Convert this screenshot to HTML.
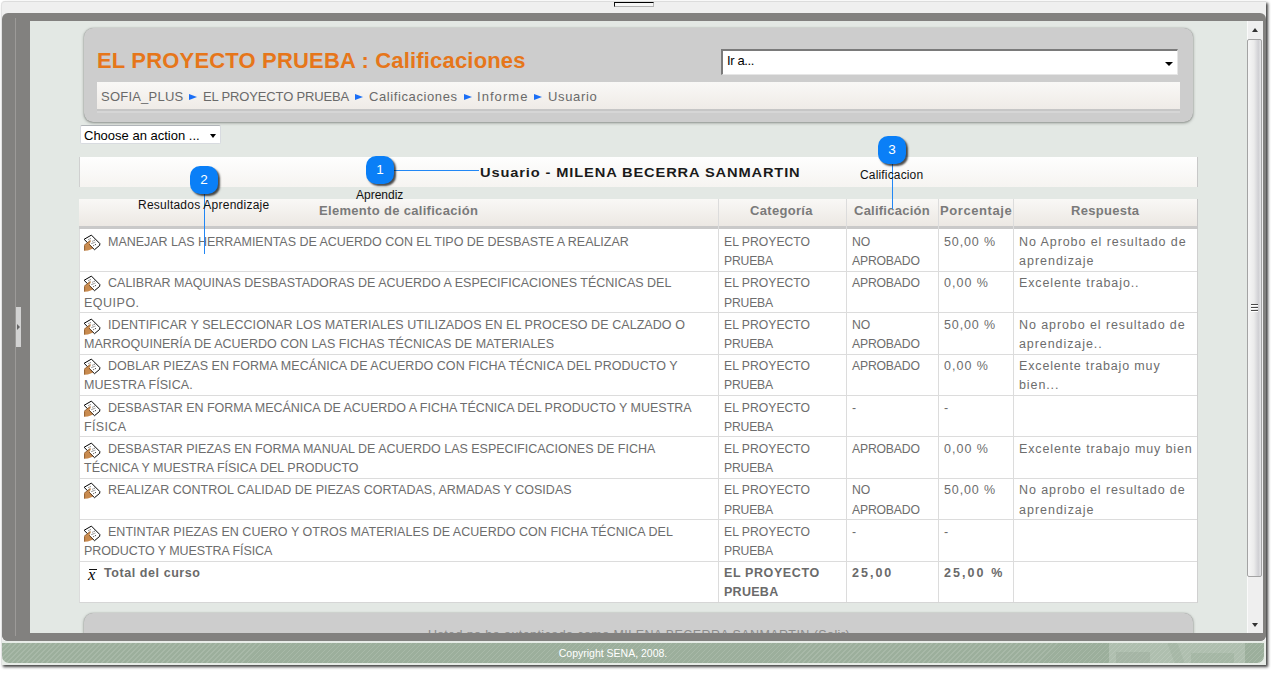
<!DOCTYPE html>
<html><head><meta charset="utf-8">
<style>
*{box-sizing:border-box}
html,body{margin:0;padding:0;width:1279px;height:678px;overflow:hidden;background:#fff;font-family:"Liberation Sans",sans-serif}
.a{position:absolute}
#outer{left:1px;top:1px;width:1265px;height:664px;background:#efefef;border-radius:4px 0 0 0;border-top:1px solid #dcdcdc;border-left:1px solid #e2e2e2;box-shadow:2px 2px 3px rgba(0,0,0,.75)}
#frame{left:2px;top:13px;width:1264px;height:628px;background:#82817f;border-radius:6px}
#vline{left:15px;top:18px;width:1px;height:618px;background:#9c9a98}
#content{left:30px;top:21px;width:1217px;height:612px;background:#e3e8e4}
#sb{left:1247px;top:21px;width:16px;height:612px;background:#efefef;border-left:1px solid #fafafa}
#thumb{left:1247px;top:39px;width:15px;height:538px;border:1px solid #a3a3a3;border-radius:2px;background:linear-gradient(90deg,#f6f6f6 0%,#ececec 45%,#d0d0d4 80%,#e6e6e8 100%)}
#footer{left:2px;top:643px;width:1262px;height:20px;border-radius:0 0 7px 7px;background:#9caf9c repeating-linear-gradient(135deg,rgba(255,255,255,0) 0px,rgba(255,255,255,0) 2.6px,rgba(255,255,255,.12) 2.6px,rgba(255,255,255,.12) 3.54px);overflow:hidden}
#copy{left:0;top:643px;width:1226px;text-align:center;color:#fff;font-size:10.5px;line-height:20px}
.panel{background:#cdcdcd;border-radius:9px;box-shadow:0 0 1px rgba(60,65,60,.45),0 1px 3px 0 rgba(50,55,50,.5)}
.sel{background:#fff}
.bc{color:#6a6a6a;font-size:13px;white-space:nowrap;line-height:16px}
.tri{width:0;height:0;border-left:8px solid #1b6ef5;border-top:3.5px solid transparent;border-bottom:3.5px solid transparent}
.callout{width:28px;height:28px;border-radius:10px;background:#0a7ff7;box-shadow:2px 2px 2px rgba(0,0,0,.7);color:#fff;font-size:13.5px;text-align:center;line-height:28px}
.cl{background:#2187f5}
.lbl{color:#111;font-size:12px;white-space:nowrap;line-height:14px}
.txt{color:#6d6d6d;font-size:12.5px;white-space:nowrap;line-height:19px}
.b{font-weight:bold;color:#6a6a6a}
.hd{color:#7a7a7a;font-size:13px;font-weight:bold;white-space:nowrap;line-height:16px}
.vl{background:#dcdcdc;width:1px}
.hl{background:#dcdcdc;height:1px}
</style></head><body>
<div id="outer" class="a"></div>
<div class="a" style="left:614px;top:2px;width:40px;height:5px;border-top:1.5px solid #000;border-left:1px solid #111;border-right:1px solid #b8b8b8;border-bottom:1px solid #b0b0b0;background:#f6f6f6"></div>
<div id="frame" class="a"></div>
<div id="vline" class="a"></div>
<div class="a" style="left:16px;top:307px;width:5px;height:40px;background:#d2d2d2"></div>
<div class="a" style="left:17px;top:324px;width:0;height:0;border-left:3px solid #666;border-top:3px solid transparent;border-bottom:3px solid transparent"></div>
<div id="content" class="a"></div>
<div id="sb" class="a"></div>
<div class="a" style="left:1252px;top:28px;width:0;height:0;border-bottom:4px solid #333;border-left:3.5px solid transparent;border-right:3.5px solid transparent"></div>
<div class="a" style="left:1252px;top:623px;width:0;height:0;border-top:4px solid #333;border-left:3.5px solid transparent;border-right:3.5px solid transparent"></div>
<div id="thumb" class="a"></div>
<div class="a" style="left:1251px;top:304px;width:7px;height:1px;background:#4a4a4a;box-shadow:0 1px 0 #fff,0 3px 0 #4a4a4a,0 4px 0 #fff,0 6px 0 #4a4a4a,0 7px 0 #fff"></div>
<div class="a" style="left:2px;top:641px;width:1264px;height:24px;background:#e7ece7"></div>
<div id="footer" class="a"><div class="a" style="left:1107px;top:0;width:136px;height:20px;background:rgba(255,255,255,.2)"></div><div class="a" style="left:1114px;top:9px;width:34px;height:11px;background:rgba(120,140,120,.18)"></div><div class="a" style="left:1169px;top:0;width:10px;height:20px;background:rgba(120,140,120,.14);transform:skewX(20deg)"></div><div class="a" style="left:1189px;top:10px;width:43px;height:10px;background:rgba(120,140,120,.16)"></div></div>
<div id="copy" class="a">Copyright SENA, 2008.</div>

<!-- header panel -->
<div class="a panel" style="left:83.5px;top:28px;width:1109.5px;height:94px"></div>
<div class="a" style="left:97px;top:45.5px;font-size:22px;font-weight:bold;color:#e6761a;line-height:30px;white-space:nowrap;letter-spacing:.174px">EL PROYECTO PRUEBA : Calificaciones</div>
<div class="a sel" style="left:721px;top:49px;width:457px;height:26px;border-top:2px solid #7a7a7a;border-left:2px solid #7a7a7a;border-bottom:1px solid #e6e6e6;border-right:1px solid #e6e6e6"></div>
<div class="a" style="left:727px;top:52px;font-size:13px;color:#000;line-height:18px;letter-spacing:-.37px">Ir a...</div>
<div class="a" style="left:1164.5px;top:61.5px;width:0;height:0;border-top:4px solid #000;border-left:4px solid transparent;border-right:4px solid transparent"></div>
<div class="a" style="left:97px;top:82px;width:1083px;height:27px;background:linear-gradient(#f9f8f6,#efebe7)"></div>
<div class="a" style="left:97px;top:109px;width:1083px;height:2px;background:#c6c6c6;box-shadow:0 2px 0 #d6d6d6"></div>
<div class="a bc" style="left:101px;top:89px;letter-spacing:.22px">SOFIA_PLUS</div>
<div class="a tri" style="left:189px;top:93.5px"></div>
<div class="a bc" style="left:203px;top:89px;letter-spacing:-.15px">EL PROYECTO PRUEBA</div>
<div class="a tri" style="left:355px;top:93.5px"></div>
<div class="a bc" style="left:369px;top:89px;letter-spacing:.6px">Calificaciones</div>
<div class="a tri" style="left:464px;top:93.5px"></div>
<div class="a bc" style="left:477px;top:89px;letter-spacing:1.05px">Informe</div>
<div class="a tri" style="left:534px;top:93.5px"></div>
<div class="a bc" style="left:548px;top:89px;letter-spacing:.65px">Usuario</div>

<!-- choose action -->
<div class="a sel" style="left:79.5px;top:125.3px;width:141.7px;height:18.9px;border:1px solid #d8dbe0;border-top-color:#b0b4b8;border-radius:2px"></div>
<div class="a" style="left:84px;top:128px;font-size:13px;color:#000;line-height:16px">Choose an action ...</div>
<div class="a" style="left:210px;top:134px;width:0;height:0;border-top:4px solid #000;border-left:3.5px solid transparent;border-right:3.5px solid transparent"></div>

<!-- table -->
<div class="a" style="left:79px;top:157px;width:1119px;height:30px;background:linear-gradient(#fefefe,#f6f4f1);border-left:1px solid #d0d0d0;border-right:1px solid #c8c8c8"></div>
<div class="a" style="left:480px;top:164px;font-size:13.5px;font-weight:bold;color:#1a1a1a;letter-spacing:.8px;line-height:18px;white-space:nowrap;transform-origin:0 0;transform:scaleX(1.085)">Usuario - MILENA BECERRA SANMARTIN</div>

<div class="a" style="left:79px;top:199px;width:1119px;height:27px;background:linear-gradient(#f9f8f6,#ece8e3);border-right:1px solid #c8c8c8"></div>
<div class="a" style="left:79px;top:226px;width:1119px;height:3px;background:#c9c9c9"></div>
<div id="tbody" class="a" style="left:79px;top:229px;width:1119px;height:374px;background:#fff;border-left:1px solid #dcdcdc;border-right:1px solid #d0d0d0;border-bottom:1px solid #d6d6d6"></div>

<div class="a hd" style="left:319px;top:202.5px;letter-spacing:.31px">Elemento de calificación</div>
<div class="a hd" style="left:750px;top:202.5px;letter-spacing:.31px">Categoría</div>
<div class="a hd" style="left:854px;top:202.5px;letter-spacing:.24px">Calificación</div>
<div class="a hd" style="left:940px;top:202.5px;letter-spacing:.59px">Porcentaje</div>
<div class="a hd" style="left:1071px;top:202.5px;letter-spacing:.29px">Respuesta</div>
<div class="a hl" style="left:80px;top:271px;width:1117px"></div>
<div class="a hl" style="left:80px;top:312px;width:1117px"></div>
<div class="a hl" style="left:80px;top:354px;width:1117px"></div>
<div class="a hl" style="left:80px;top:395px;width:1117px"></div>
<div class="a hl" style="left:80px;top:436px;width:1117px"></div>
<div class="a hl" style="left:80px;top:478px;width:1117px"></div>
<div class="a hl" style="left:80px;top:519px;width:1117px"></div>
<div class="a hl" style="left:80px;top:561px;width:1117px"></div>
<div class="a vl" style="left:718px;top:199px;height:403px"></div>
<div class="a vl" style="left:846px;top:199px;height:403px"></div>
<div class="a vl" style="left:938px;top:199px;height:403px"></div>
<div class="a vl" style="left:1013px;top:199px;height:403px"></div>
<svg class="a" style="left:83px;top:234px" width="18" height="18" viewBox="0 0 18 18"><path d="M1.1 5.3L8.4 1.1L16.8 9.5L16.7 11.3L11.5 15.7Z" fill="#fff" stroke="#000" stroke-width="1"/><path d="M5.5 5.6L7.8 4.4M9.5 7.2L12 6M8.6 9.5L12.6 8M10.3 11.7L13.7 10" stroke="#222" stroke-width=".9" stroke-dasharray="1 1"/><path d="M7.4 6.3L1.1 11.3L1.1 16.8L4.8 16.5L7.7 15.5L9.9 14.6L6.3 10.3L7.8 7.4Z" fill="#c98b4f"/><path d="M7.4 6.3L1.1 11.3M6.3 10.3L9.9 14.6M1.6 12L1.6 16.5" stroke="#7a4a20" stroke-width=".7" fill="none"/></svg>
<div class="a txt" style="left:108px;top:232.7px;letter-spacing:-0.03px">MANEJAR LAS HERRAMIENTAS DE ACUERDO CON EL TIPO DE DESBASTE A REALIZAR</div>
<div class="a txt" style="left:724px;top:232.7px;letter-spacing:0px;font-size:12.2px">EL PROYECTO</div>
<div class="a txt" style="left:724px;top:251.7px;letter-spacing:-0.2px;font-size:12.2px">PRUEBA</div>
<div class="a txt" style="left:852px;top:232.7px;letter-spacing:0px;font-size:12.2px">NO</div>
<div class="a txt" style="left:852px;top:251.7px;letter-spacing:-0.17px;font-size:12.2px">APROBADO</div>
<div class="a txt" style="left:944px;top:232.7px;letter-spacing:0.87px">50,00 %</div>
<div class="a txt" style="left:1019px;top:232.7px;letter-spacing:0.92px">No Aprobo el resultado de</div>
<div class="a txt" style="left:1019px;top:251.7px;letter-spacing:0.99px">aprendizaje</div>
<svg class="a" style="left:83px;top:275px" width="18" height="18" viewBox="0 0 18 18"><path d="M1.1 5.3L8.4 1.1L16.8 9.5L16.7 11.3L11.5 15.7Z" fill="#fff" stroke="#000" stroke-width="1"/><path d="M5.5 5.6L7.8 4.4M9.5 7.2L12 6M8.6 9.5L12.6 8M10.3 11.7L13.7 10" stroke="#222" stroke-width=".9" stroke-dasharray="1 1"/><path d="M7.4 6.3L1.1 11.3L1.1 16.8L4.8 16.5L7.7 15.5L9.9 14.6L6.3 10.3L7.8 7.4Z" fill="#c98b4f"/><path d="M7.4 6.3L1.1 11.3M6.3 10.3L9.9 14.6M1.6 12L1.6 16.5" stroke="#7a4a20" stroke-width=".7" fill="none"/></svg>
<div class="a txt" style="left:108px;top:273.7px;letter-spacing:0.007px">CALIBRAR MAQUINAS DESBASTADORAS DE ACUERDO A ESPECIFICACIONES TÉCNICAS DEL</div>
<div class="a txt" style="left:84px;top:293.7px;letter-spacing:0.5px">EQUIPO.</div>
<div class="a txt" style="left:724px;top:273.7px;letter-spacing:0px;font-size:12.2px">EL PROYECTO</div>
<div class="a txt" style="left:724px;top:293.7px;letter-spacing:-0.2px;font-size:12.2px">PRUEBA</div>
<div class="a txt" style="left:852px;top:273.7px;letter-spacing:-0.17px;font-size:12.2px">APROBADO</div>
<div class="a txt" style="left:944px;top:273.7px;letter-spacing:1.0px">0,00 %</div>
<div class="a txt" style="left:1019px;top:273.7px;letter-spacing:0.89px">Excelente trabajo..</div>
<svg class="a" style="left:83px;top:318px" width="18" height="18" viewBox="0 0 18 18"><path d="M1.1 5.3L8.4 1.1L16.8 9.5L16.7 11.3L11.5 15.7Z" fill="#fff" stroke="#000" stroke-width="1"/><path d="M5.5 5.6L7.8 4.4M9.5 7.2L12 6M8.6 9.5L12.6 8M10.3 11.7L13.7 10" stroke="#222" stroke-width=".9" stroke-dasharray="1 1"/><path d="M7.4 6.3L1.1 11.3L1.1 16.8L4.8 16.5L7.7 15.5L9.9 14.6L6.3 10.3L7.8 7.4Z" fill="#c98b4f"/><path d="M7.4 6.3L1.1 11.3M6.3 10.3L9.9 14.6M1.6 12L1.6 16.5" stroke="#7a4a20" stroke-width=".7" fill="none"/></svg>
<div class="a txt" style="left:108px;top:316.2px;letter-spacing:0.065px">IDENTIFICAR Y SELECCIONAR LOS MATERIALES UTILIZADOS EN EL PROCESO DE CALZADO O</div>
<div class="a txt" style="left:84px;top:335.2px;letter-spacing:0.016px">MARROQUINERÍA DE ACUERDO CON LAS FICHAS TÉCNICAS DE MATERIALES</div>
<div class="a txt" style="left:724px;top:316.2px;letter-spacing:0px;font-size:12.2px">EL PROYECTO</div>
<div class="a txt" style="left:724px;top:335.2px;letter-spacing:-0.2px;font-size:12.2px">PRUEBA</div>
<div class="a txt" style="left:852px;top:316.2px;letter-spacing:0px;font-size:12.2px">NO</div>
<div class="a txt" style="left:852px;top:335.2px;letter-spacing:-0.17px;font-size:12.2px">APROBADO</div>
<div class="a txt" style="left:944px;top:316.2px;letter-spacing:0.87px">50,00 %</div>
<div class="a txt" style="left:1019px;top:316.2px;letter-spacing:0.91px">No aprobo el resultado de</div>
<div class="a txt" style="left:1019px;top:335.2px;letter-spacing:0.92px">aprendizaje..</div>
<svg class="a" style="left:83px;top:358px" width="18" height="18" viewBox="0 0 18 18"><path d="M1.1 5.3L8.4 1.1L16.8 9.5L16.7 11.3L11.5 15.7Z" fill="#fff" stroke="#000" stroke-width="1"/><path d="M5.5 5.6L7.8 4.4M9.5 7.2L12 6M8.6 9.5L12.6 8M10.3 11.7L13.7 10" stroke="#222" stroke-width=".9" stroke-dasharray="1 1"/><path d="M7.4 6.3L1.1 11.3L1.1 16.8L4.8 16.5L7.7 15.5L9.9 14.6L6.3 10.3L7.8 7.4Z" fill="#c98b4f"/><path d="M7.4 6.3L1.1 11.3M6.3 10.3L9.9 14.6M1.6 12L1.6 16.5" stroke="#7a4a20" stroke-width=".7" fill="none"/></svg>
<div class="a txt" style="left:108px;top:356.7px;letter-spacing:0.054px">DOBLAR PIEZAS EN FORMA MECÁNICA DE ACUERDO CON FICHA TÉCNICA DEL PRODUCTO Y</div>
<div class="a txt" style="left:84px;top:375.7px;letter-spacing:0.07px">MUESTRA FÍSICA.</div>
<div class="a txt" style="left:724px;top:356.7px;letter-spacing:0px;font-size:12.2px">EL PROYECTO</div>
<div class="a txt" style="left:724px;top:375.7px;letter-spacing:-0.2px;font-size:12.2px">PRUEBA</div>
<div class="a txt" style="left:852px;top:356.7px;letter-spacing:-0.17px;font-size:12.2px">APROBADO</div>
<div class="a txt" style="left:944px;top:356.7px;letter-spacing:1.0px">0,00 %</div>
<div class="a txt" style="left:1019px;top:356.7px;letter-spacing:0.85px">Excelente trabajo muy</div>
<div class="a txt" style="left:1019px;top:375.7px;letter-spacing:0.9px">bien...</div>
<svg class="a" style="left:83px;top:400px" width="18" height="18" viewBox="0 0 18 18"><path d="M1.1 5.3L8.4 1.1L16.8 9.5L16.7 11.3L11.5 15.7Z" fill="#fff" stroke="#000" stroke-width="1"/><path d="M5.5 5.6L7.8 4.4M9.5 7.2L12 6M8.6 9.5L12.6 8M10.3 11.7L13.7 10" stroke="#222" stroke-width=".9" stroke-dasharray="1 1"/><path d="M7.4 6.3L1.1 11.3L1.1 16.8L4.8 16.5L7.7 15.5L9.9 14.6L6.3 10.3L7.8 7.4Z" fill="#c98b4f"/><path d="M7.4 6.3L1.1 11.3M6.3 10.3L9.9 14.6M1.6 12L1.6 16.5" stroke="#7a4a20" stroke-width=".7" fill="none"/></svg>
<div class="a txt" style="left:108px;top:398.5px;letter-spacing:-0.013px">DESBASTAR EN FORMA MECÁNICA DE ACUERDO A FICHA TÉCNICA DEL PRODUCTO Y MUESTRA</div>
<div class="a txt" style="left:84px;top:417.5px;letter-spacing:0.36px">FÍSICA</div>
<div class="a txt" style="left:724px;top:398.5px;letter-spacing:0px;font-size:12.2px">EL PROYECTO</div>
<div class="a txt" style="left:724px;top:417.5px;letter-spacing:-0.2px;font-size:12.2px">PRUEBA</div>
<div class="a txt" style="left:852px;top:398.5px;letter-spacing:0px;font-size:12.2px">-</div>
<div class="a txt" style="left:944px;top:398.5px;letter-spacing:0px">-</div>
<svg class="a" style="left:83px;top:442px" width="18" height="18" viewBox="0 0 18 18"><path d="M1.1 5.3L8.4 1.1L16.8 9.5L16.7 11.3L11.5 15.7Z" fill="#fff" stroke="#000" stroke-width="1"/><path d="M5.5 5.6L7.8 4.4M9.5 7.2L12 6M8.6 9.5L12.6 8M10.3 11.7L13.7 10" stroke="#222" stroke-width=".9" stroke-dasharray="1 1"/><path d="M7.4 6.3L1.1 11.3L1.1 16.8L4.8 16.5L7.7 15.5L9.9 14.6L6.3 10.3L7.8 7.4Z" fill="#c98b4f"/><path d="M7.4 6.3L1.1 11.3M6.3 10.3L9.9 14.6M1.6 12L1.6 16.5" stroke="#7a4a20" stroke-width=".7" fill="none"/></svg>
<div class="a txt" style="left:108px;top:440.4px;letter-spacing:0px">DESBASTAR PIEZAS EN FORMA MANUAL DE ACUERDO LAS ESPECIFICACIONES DE FICHA</div>
<div class="a txt" style="left:84px;top:459.4px;letter-spacing:0px">TÉCNICA Y MUESTRA FÍSICA DEL PRODUCTO</div>
<div class="a txt" style="left:724px;top:440.4px;letter-spacing:0px;font-size:12.2px">EL PROYECTO</div>
<div class="a txt" style="left:724px;top:459.4px;letter-spacing:-0.2px;font-size:12.2px">PRUEBA</div>
<div class="a txt" style="left:852px;top:440.4px;letter-spacing:-0.17px;font-size:12.2px">APROBADO</div>
<div class="a txt" style="left:944px;top:440.4px;letter-spacing:1.0px">0,00 %</div>
<div class="a txt" style="left:1019px;top:440.4px;letter-spacing:0.88px">Excelente trabajo muy bien</div>
<svg class="a" style="left:83px;top:482px" width="18" height="18" viewBox="0 0 18 18"><path d="M1.1 5.3L8.4 1.1L16.8 9.5L16.7 11.3L11.5 15.7Z" fill="#fff" stroke="#000" stroke-width="1"/><path d="M5.5 5.6L7.8 4.4M9.5 7.2L12 6M8.6 9.5L12.6 8M10.3 11.7L13.7 10" stroke="#222" stroke-width=".9" stroke-dasharray="1 1"/><path d="M7.4 6.3L1.1 11.3L1.1 16.8L4.8 16.5L7.7 15.5L9.9 14.6L6.3 10.3L7.8 7.4Z" fill="#c98b4f"/><path d="M7.4 6.3L1.1 11.3M6.3 10.3L9.9 14.6M1.6 12L1.6 16.5" stroke="#7a4a20" stroke-width=".7" fill="none"/></svg>
<div class="a txt" style="left:108px;top:480.7px;letter-spacing:0.016px">REALIZAR CONTROL CALIDAD DE PIEZAS CORTADAS, ARMADAS Y COSIDAS</div>
<div class="a txt" style="left:724px;top:480.7px;letter-spacing:0px;font-size:12.2px">EL PROYECTO</div>
<div class="a txt" style="left:724px;top:500.7px;letter-spacing:-0.2px;font-size:12.2px">PRUEBA</div>
<div class="a txt" style="left:852px;top:480.7px;letter-spacing:0px;font-size:12.2px">NO</div>
<div class="a txt" style="left:852px;top:500.7px;letter-spacing:-0.17px;font-size:12.2px">APROBADO</div>
<div class="a txt" style="left:944px;top:480.7px;letter-spacing:0.87px">50,00 %</div>
<div class="a txt" style="left:1019px;top:480.7px;letter-spacing:0.91px">No aprobo el resultado de</div>
<div class="a txt" style="left:1019px;top:500.7px;letter-spacing:0.99px">aprendizaje</div>
<svg class="a" style="left:83px;top:525px" width="18" height="18" viewBox="0 0 18 18"><path d="M1.1 5.3L8.4 1.1L16.8 9.5L16.7 11.3L11.5 15.7Z" fill="#fff" stroke="#000" stroke-width="1"/><path d="M5.5 5.6L7.8 4.4M9.5 7.2L12 6M8.6 9.5L12.6 8M10.3 11.7L13.7 10" stroke="#222" stroke-width=".9" stroke-dasharray="1 1"/><path d="M7.4 6.3L1.1 11.3L1.1 16.8L4.8 16.5L7.7 15.5L9.9 14.6L6.3 10.3L7.8 7.4Z" fill="#c98b4f"/><path d="M7.4 6.3L1.1 11.3M6.3 10.3L9.9 14.6M1.6 12L1.6 16.5" stroke="#7a4a20" stroke-width=".7" fill="none"/></svg>
<div class="a txt" style="left:108px;top:523.3px;letter-spacing:0.027px">ENTINTAR PIEZAS EN CUERO Y OTROS MATERIALES DE ACUERDO CON FICHA TÉCNICA DEL</div>
<div class="a txt" style="left:84px;top:542.3px;letter-spacing:-0.08px">PRODUCTO Y MUESTRA FÍSICA</div>
<div class="a txt" style="left:724px;top:523.3px;letter-spacing:0px;font-size:12.2px">EL PROYECTO</div>
<div class="a txt" style="left:724px;top:542.3px;letter-spacing:-0.2px;font-size:12.2px">PRUEBA</div>
<div class="a txt" style="left:852px;top:523.3px;letter-spacing:0px;font-size:12.2px">-</div>
<div class="a txt" style="left:944px;top:523.3px;letter-spacing:0px">-</div>
<div class="a" style="left:88px;top:564.6px;font-family:'Liberation Serif';font-style:italic;font-size:16.5px;line-height:19px;color:#000">x</div>
<div class="a" style="left:88.5px;top:569px;width:8px;height:1.2px;background:#111"></div>
<div class="a txt b" style="left:104px;top:563.7px;letter-spacing:.57px">Total del curso</div>
<div class="a txt b" style="left:724px;top:563.7px;letter-spacing:0.6px">EL PROYECTO</div>
<div class="a txt b" style="left:724px;top:582.7px;letter-spacing:0.28px">PRUEBA</div>
<div class="a txt b" style="left:852px;top:563.7px;letter-spacing:2px">25,00</div>
<div class="a txt b" style="left:944px;top:563.7px;letter-spacing:2.07px">25,00 %</div>
<!-- footer panel -->
<div class="a" style="left:30px;top:21px;width:1217px;height:612px;overflow:hidden">
<div class="a panel" style="left:53.5px;top:591.5px;width:1109.5px;height:40px"></div>
<div class="a" style="left:398px;top:605.5px;font-size:12.5px;color:#8a8a8a;white-space:nowrap;line-height:16px;letter-spacing:.43px">Usted no ha autenticado como MILENA BECERRA SANMARTIN (Salir)</div>
</div>
<div class="a" style="left:2px;top:633px;width:1264px;height:8px;background:#82817f;border-radius:0 0 6px 6px"></div>
<div class="a" style="left:1263px;top:620px;width:3px;height:14px;background:#82817f"></div>
<div class="a" style="left:15px;top:630px;width:1px;height:6px;background:#9c9a98"></div>
<!-- callouts -->
<div class="a cl" style="left:394px;top:169.9px;width:85px;height:1.5px"></div>
<div class="a cl" style="left:203.9px;top:193px;width:1.5px;height:61px"></div>
<div class="a cl" style="left:891.9px;top:163px;width:1.5px;height:46px"></div>
<div class="a callout" style="left:366px;top:156px">1</div>
<div class="a callout" style="left:190px;top:166px">2</div>
<div class="a callout" style="left:878px;top:136px">3</div>
<div class="a lbl" style="left:356px;top:188px">Aprendiz</div>
<div class="a lbl" style="left:138px;top:198px;letter-spacing:.24px">Resultados Aprendizaje</div>
<div class="a lbl" style="left:860px;top:168px;letter-spacing:.16px">Calificacion</div>

</body></html>
